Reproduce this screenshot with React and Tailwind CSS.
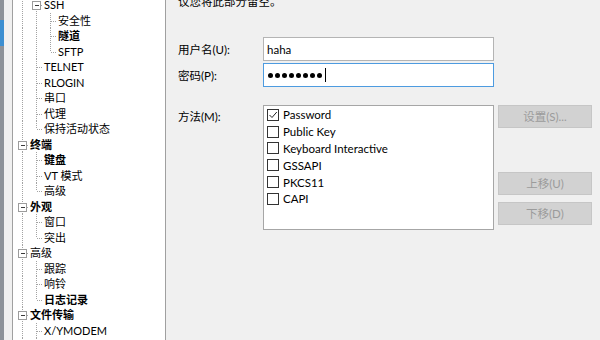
import React from "react";

const rows = [
  { t: "SSH", anc: [1], own: "mid", box: true },
  { t: "安全性", anc: [1, 1], own: "mid" },
  { t: "隧道", anc: [1, 1], own: "mid", bold: true },
  { t: "SFTP", anc: [1, 1], own: "end" },
  { t: "TELNET", anc: [1], own: "mid" },
  { t: "RLOGIN", anc: [1], own: "mid" },
  { t: "串口", anc: [1], own: "mid" },
  { t: "代理", anc: [1], own: "mid" },
  { t: "保持活动状态", anc: [1], own: "end" },
  { t: "终端", anc: [], own: "mid", box: true, bold: true },
  { t: "键盘", anc: [1], own: "mid", bold: true },
  { t: "VT 模式", anc: [1], own: "mid" },
  { t: "高级", anc: [1], own: "end" },
  { t: "外观", anc: [], own: "mid", box: true, bold: true },
  { t: "窗口", anc: [1], own: "mid" },
  { t: "突出", anc: [1], own: "end" },
  { t: "高级", anc: [], own: "mid", box: true },
  { t: "跟踪", anc: [1], own: "mid" },
  { t: "响铃", anc: [1], own: "mid" },
  { t: "日志记录", anc: [1], own: "end", bold: true },
  { t: "文件传输", anc: [], own: "mid", box: true, bold: true },
  { t: "X/YMODEM", anc: [1], own: "mid" },
  { t: "ZMODEM", anc: [1], own: "mid" },
];

function Guide({ type, box }) {
  const c = "#a3a3a3";
  return (
    <svg width="14" height="15.5" className="shrink-0 block" shapeRendering="crispEdges">
      {type !== "none" && (
        <line x1="7.5" y1="0" x2="7.5" y2={type === "end" ? 8 : 15.5} stroke={c} strokeWidth="1" strokeDasharray="1 1" />
      )}
      {(type === "mid" || type === "end") && (
        <line x1="8" y1="8.5" x2="14" y2="8.5" stroke={c} strokeWidth="1" strokeDasharray="1 1" />
      )}
      {box && (
        <g>
          <rect x="3.5" y="4.5" width="8" height="8" fill="#fff" stroke="#9c9c9c" strokeWidth="1" />
          <line x1="5.5" y1="8.5" x2="10" y2="8.5" stroke="#3a3a3a" strokeWidth="1" />
        </g>
      )}
    </svg>
  );
}

function TreeRow({ r }) {
  return (
    <div className="flex items-center h-[15.5px] pl-[2px] whitespace-nowrap">
      {r.anc.map((a, i) => (
        <Guide key={i} type={a ? "line" : "none"} />
      ))}
      <Guide type={r.own} box={r.box} />
      <span className={"ml-[1px] leading-[15px] text-[11px] text-black " + (r.bold ? "font-bold" : "")}>{r.t}</span>
    </div>
  );
}

function Check({ checked }) {
  return (
    <div className="w-[12px] h-[12px] border border-[#333] bg-white shrink-0 flex items-center justify-center">
      {checked && (
        <svg width="10" height="10" viewBox="0 0 10 10">
          <polyline points="1.5,5 4,7.5 8.8,2" fill="none" stroke="#222" strokeWidth="1" />
        </svg>
      )}
    </div>
  );
}

const methods = [
  ["Password", true],
  ["Public Key", false],
  ["Keyboard Interactive", false],
  ["GSSAPI", false],
  ["PKCS11", false],
  ["CAPI", false],
];

function Btn({ children, cls }) {
  return (
    <div className={"w-[94px] h-[23px] bg-[#d2d2d2] border border-[#c6c6c6] flex items-center justify-center text-[11.5px] text-[#9b9b9b] " + (cls || "")}>
      {children}
    </div>
  );
}

export default function App() {
  return (
    <div className="w-[600px] h-[340px] overflow-hidden flex bg-[#f0f0f0] font-[Lato,'Noto_Sans_CJK_SC',sans-serif] text-black">
      {/* left window edge */}
      <div className="w-[4px] h-full flex flex-col bg-[#8d9299]">
        <div className="h-[20px]" />
        <div className="h-[26px] bg-[#3d8fd1]" />
      </div>
      <div className="w-[8px] h-full bg-[#f0f0f0]" />
      {/* tree */}
      <div className="w-[154px] h-full bg-white border-x border-[#a0a0a0] overflow-hidden">
        <div className="-mt-[3px] flex flex-col">
          {rows.map((r, i) => (
            <TreeRow key={i} r={r} />
          ))}
        </div>
      </div>
      {/* right panel */}
      <div className="flex-1 h-full pl-[12px] flex flex-col text-[11.5px]">
        <div className="-mt-[6px] h-[15px] leading-[15px] whitespace-nowrap">议您将此部分留空。</div>
        <div className="mt-[28px] flex items-center">
          <div className="w-[85px] leading-[15px]">用户名(U):</div>
          <div className="w-[231px] h-[24px] bg-white border border-[#b4b4b4] flex items-center pl-[3px] leading-[15px]">haha</div>
        </div>
        <div className="mt-[2px] flex items-center">
          <div className="w-[85px] leading-[15px]">密码(P):</div>
          <div className="w-[231px] h-[24px] bg-white border border-[#4d9be0] flex items-center pl-[4px] gap-[2px]">
            {Array.from({ length: 8 }).map((_, i) => (
              <div key={i} className="w-[5px] h-[5px] rounded-full bg-black" />
            ))}
            <div className="w-[1px] h-[14px] bg-black ml-[1px]" />
          </div>
        </div>
        <div className="mt-[18px] flex items-start">
          <div className="w-[85px] pt-[3.5px] leading-[15px]">方法(M):</div>
          <div className="w-[231px] h-[125px] bg-white border border-[#a6a6a6] pt-[0.5px]">
            {methods.map(([m, c]) => (
              <div key={m} className="h-[16.8px] flex items-center pl-[3px] gap-[4px] whitespace-nowrap">
                <Check checked={c} />
                <span className="leading-[15px]">{m}</span>
              </div>
            ))}
          </div>
          <div className="ml-[4px] flex flex-col">
            <Btn>设置(S)...</Btn>
            <Btn cls="mt-[44px]">上移(U)</Btn>
            <Btn cls="mt-[7px]">下移(D)</Btn>
          </div>
        </div>
      </div>
    </div>
  );
}
